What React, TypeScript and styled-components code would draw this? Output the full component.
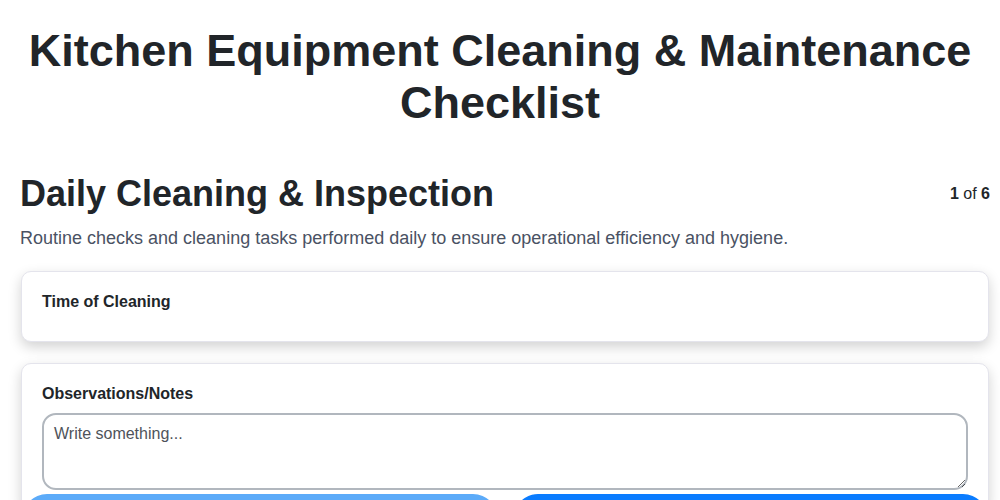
import React from "react";
import styled, { createGlobalStyle } from "styled-components";

const Global = createGlobalStyle`
  html, body { margin: 0; padding: 0; background: #ffffff; }
  body { font-family: "Liberation Sans", Arial, sans-serif; color: #212529; }
  * { box-sizing: border-box; }
`;

const Page = styled.div`
  display: flex;
  flex-direction: column;
  padding: 25px 10px 80px 20px;
`;

const Title = styled.h1`
  margin: 0 0 44px 0;
  padding-right: 10px;
  font-size: 45px;
  font-weight: 700;
  text-align: center;
  color: #212529;
`;

const SectionHeader = styled.div`
  display: flex;
  align-items: center;
  justify-content: space-between;
`;

const SectionTitle = styled.h2`
  margin: 0;
  font-size: 36px;
  font-weight: 700;
  color: #212529;
`;

const Counter = styled.div`
  font-size: 16px;
  color: #212529;
  b { font-weight: 700; }
`;

const Description = styled.p`
  margin: 13px 0 22px 0;
  font-size: 18px;
  color: #4a5263;
`;

const Card = styled.div`
  display: flex;
  flex-direction: column;
  background: #ffffff;
  border: 1px solid #e4e4ec;
  border-radius: 10px;
  padding: 21px 20px 20px 20px;
  margin: 0 1px 21px 1px;
  box-shadow: 0 5px 13px rgba(0, 0, 0, 0.18);
`;

const Label = styled.label`
  font-size: 16px;
  font-weight: 700;
  color: #212529;
  margin-bottom: 10px;
`;

const TextArea = styled.textarea`
  height: 77px;
  border: 2px solid #b1b7be;
  border-radius: 14px;
  padding: 10px;
  font-family: "Liberation Sans", Arial, sans-serif;
  font-size: 16px;
  color: #212529;
  resize: vertical;
  outline: none;
  &::placeholder { color: #4f535a; opacity: 1; }
`;

const Footer = styled.div`
  position: fixed;
  left: 22px;
  right: 12px;
  top: 494px;
  display: flex;
  gap: 15px;
`;

const NavButton = styled.button<{ $primary?: boolean }>`
  flex: 1;
  height: 50px;
  border: none;
  border-radius: 25px;
  background: ${(p) => (p.$primary ? "#0a7cff" : "#5cabf9")};
`;

export default function App() {
  return (
    <>
      <Global />
      <Page>
        <Title>Kitchen Equipment Cleaning &amp; Maintenance Checklist</Title>
        <SectionHeader>
          <SectionTitle>Daily Cleaning &amp; Inspection</SectionTitle>
          <Counter>
            <b>1</b> of <b>6</b>
          </Counter>
        </SectionHeader>
        <Description>
          Routine checks and cleaning tasks performed daily to ensure operational efficiency and hygiene.
        </Description>
        <Card>
          <Label>Time of Cleaning</Label>
        </Card>
        <Card>
          <Label>Observations/Notes</Label>
          <TextArea placeholder="Write something..." />
        </Card>
      </Page>
      <Footer>
        <NavButton aria-label="Previous" />
        <NavButton $primary aria-label="Next" />
      </Footer>
    </>
  );
}
